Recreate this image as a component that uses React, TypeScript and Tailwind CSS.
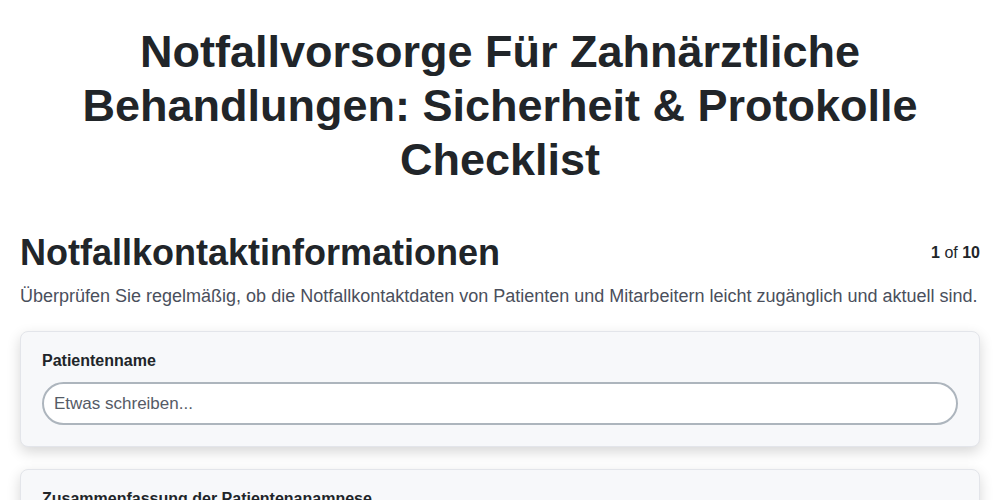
export default function App() {
  return (
    <div
      className="min-h-screen bg-white px-[20px] pt-[25px] text-[#212529]"
      style={{ fontFamily: '"Liberation Sans", Arial, sans-serif' }}
    >
      {/* Title */}
      <h1 className="mx-auto max-w-[860px] text-center text-[45px] font-bold leading-[54px]">
        Notfallvorsorge Für Zahnärztliche Behandlungen: Sicherheit &amp; Protokolle Checklist
      </h1>

      {/* Section header */}
      <div className="mt-[44px] flex items-start justify-between">
        <h2 className="text-[36px] font-bold leading-[44px]">Notfallkontaktinformationen</h2>
        <span className="mt-[10px] text-base">
          <b>1</b> of <b>10</b>
        </span>
      </div>
      <p className="mt-[8px] text-[18px] leading-[27px] text-[#4a4f5c]">
        Überprüfen Sie regelmäßig, ob die Notfallkontaktdaten von Patienten und Mitarbeitern leicht zugänglich und aktuell sind.
      </p>

      {/* Cards */}
      <div className="mt-[21px] flex flex-col gap-[22px] pb-8">
        <div className="rounded-lg border border-[#e3e5ea] bg-[#f7f8fa] px-[21px] pb-[21px] pt-[17px] shadow-[0_5px_14px_rgba(0,0,0,0.16)]">
          <label className="block text-base font-bold leading-6">Patientenname</label>
          <input
            type="text"
            placeholder="Etwas schreiben..."
            className="mt-[9px] h-[43px] w-full rounded-full border-2 border-[#adb5bd] bg-white px-[10px] text-[17px] text-[#212529] outline-none placeholder:text-[#555b66]"
          />
        </div>
        <div className="rounded-lg border border-[#e3e5ea] bg-[#f7f8fa] px-[21px] pb-[21px] pt-[17px] shadow-[0_5px_14px_rgba(0,0,0,0.16)]">
          <label className="block text-base font-bold leading-6">Zusammenfassung der Patientenanamnese</label>
          <textarea
            placeholder="Etwas schreiben..."
            className="mt-[9px] h-[80px] w-full rounded-2xl border-2 border-[#adb5bd] bg-white px-[10px] py-2 text-[17px] outline-none placeholder:text-[#555b66]"
          />
        </div>
      </div>
    </div>
  );
}
